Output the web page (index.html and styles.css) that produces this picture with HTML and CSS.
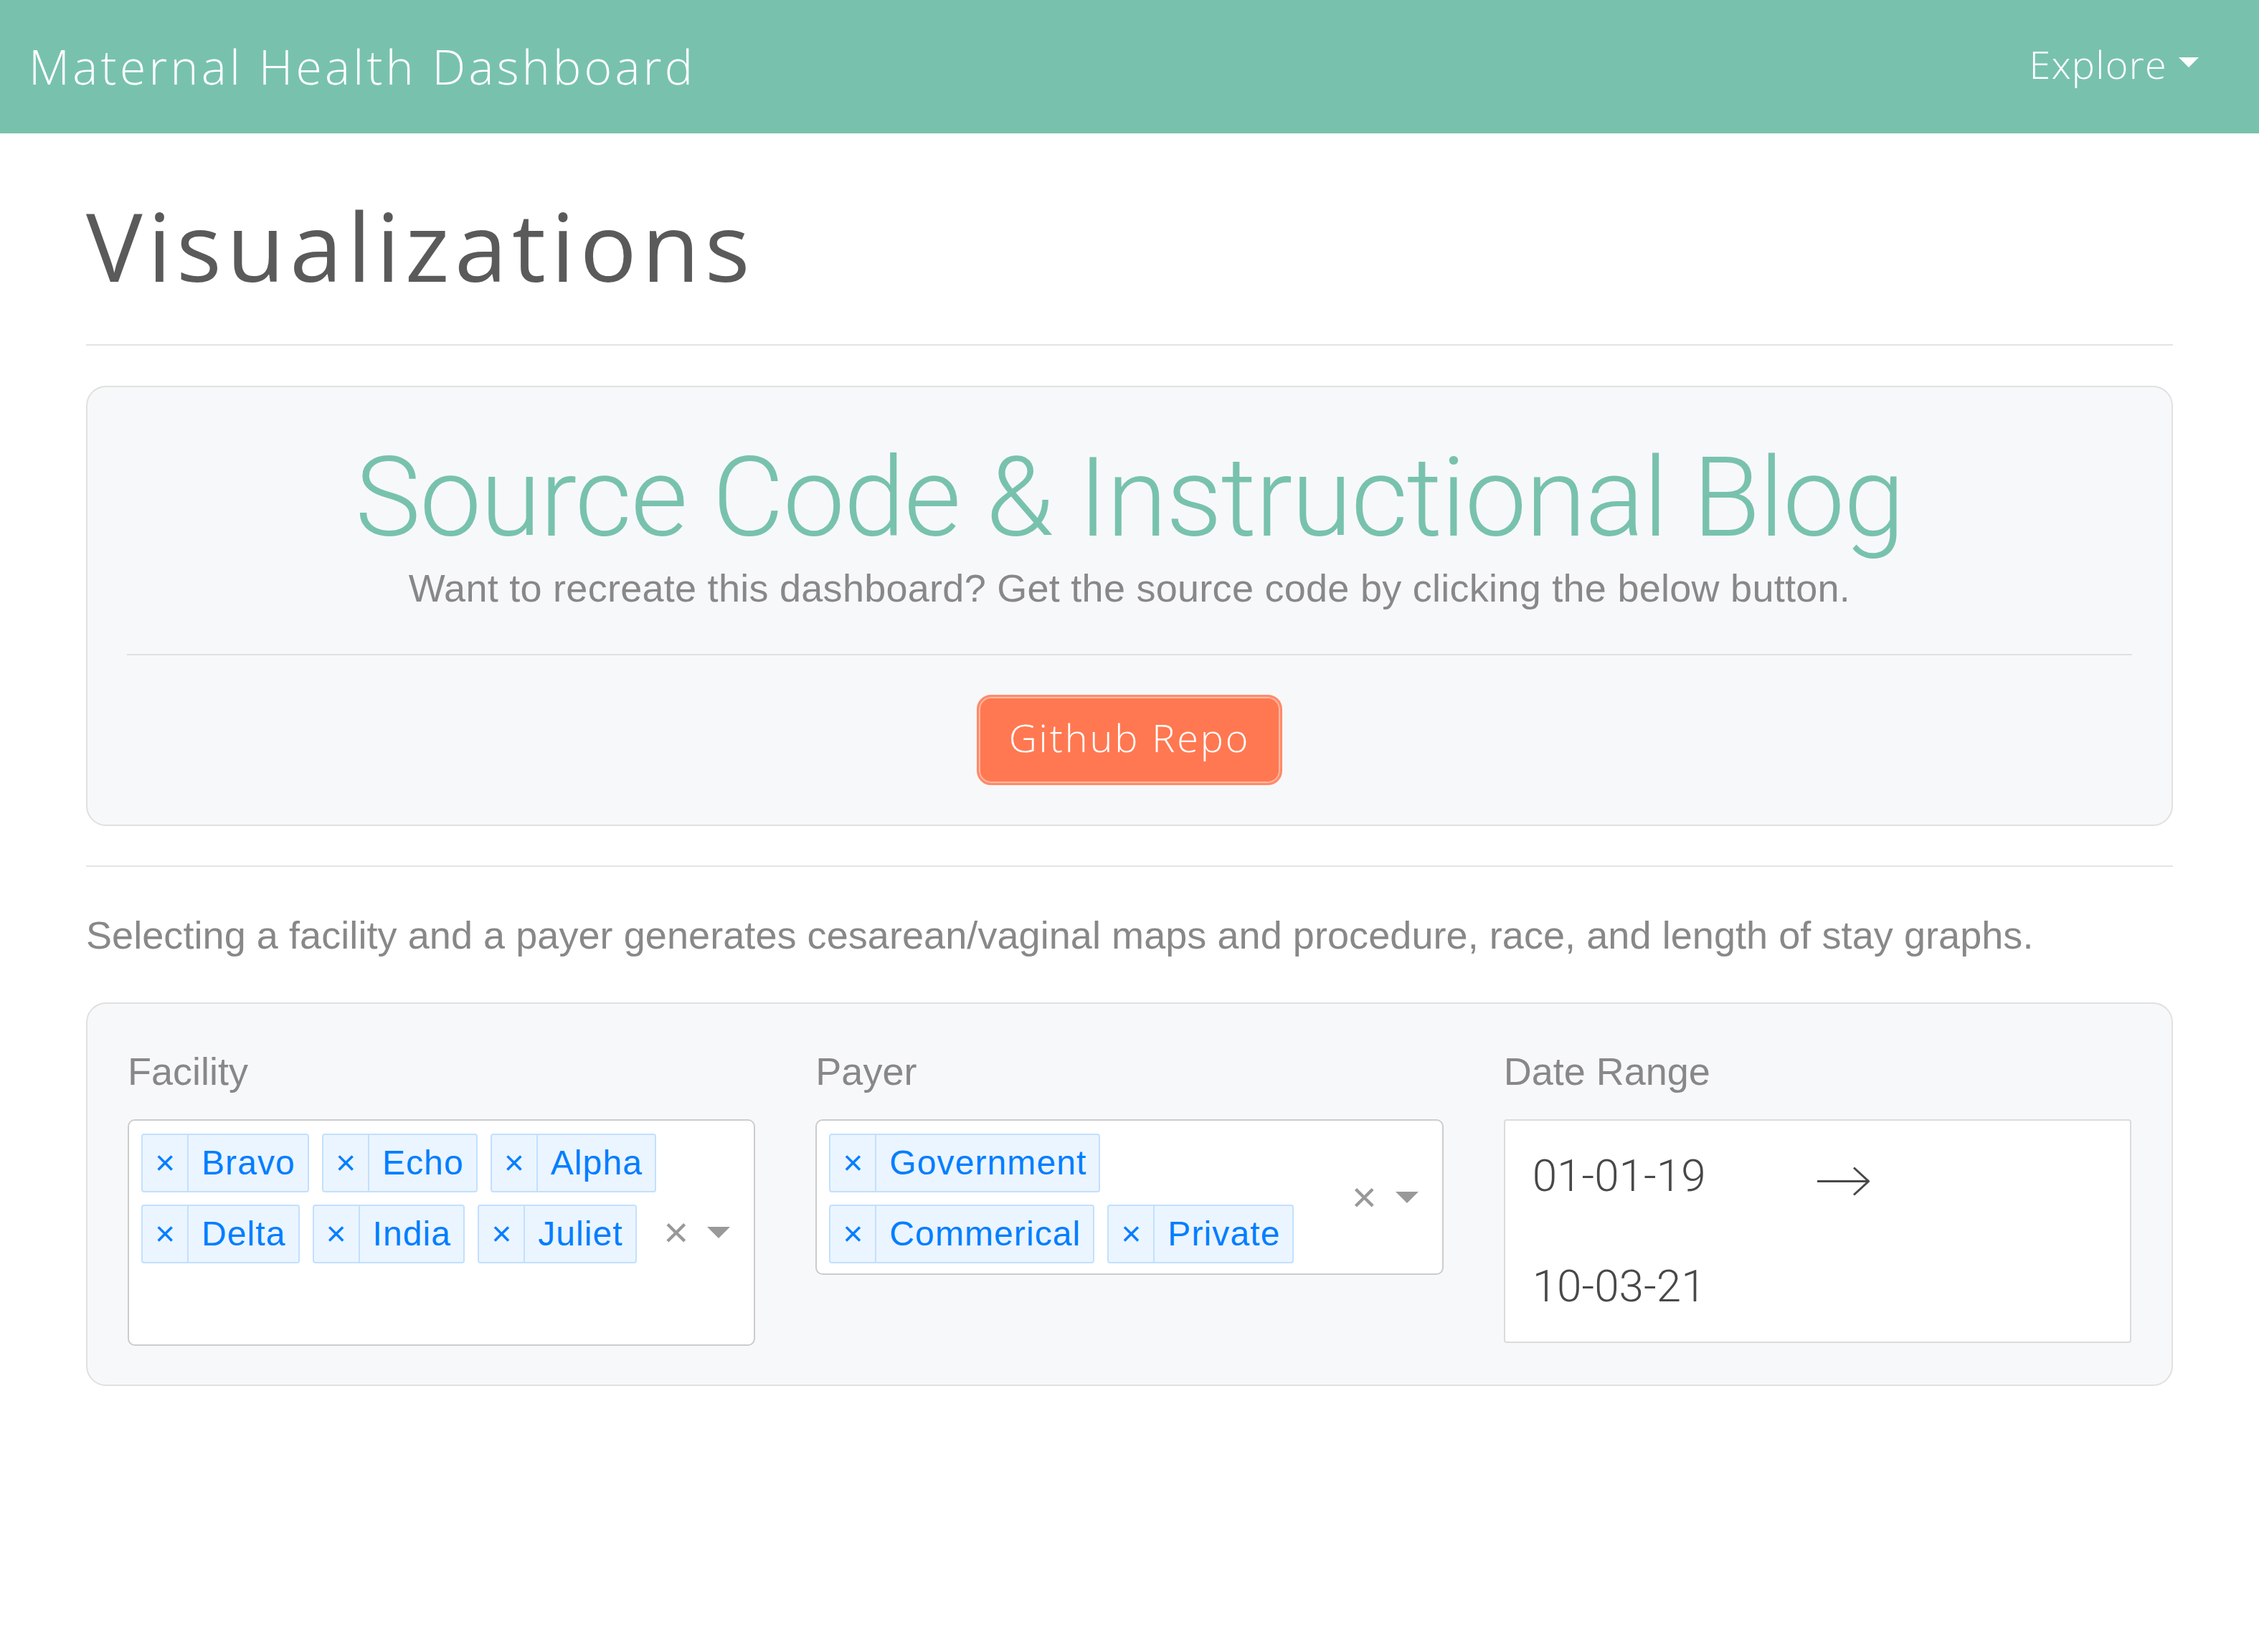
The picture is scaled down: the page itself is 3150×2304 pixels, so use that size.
FILE: index.html
```html
<!DOCTYPE html>
<html lang="en">
<head>
<meta charset="utf-8">
<title>Maternal Health Dashboard</title>
<link rel="stylesheet" href="styles.css">
</head>
<body>
<nav class="navbar">
  <span class="brand">Maternal Health Dashboard</span>
  <span class="explore">Explore<span class="caret"></span></span>
</nav>
<main class="container">
  <h1 class="page-title">Visualizations</h1>
  <hr class="rule">
  <section class="jumbo">
    <h2 class="jumbo-title">Source Code &amp; Instructional Blog</h2>
    <p class="lead">Want to recreate this dashboard? Get the source code by clicking the below button.</p>
    <hr class="jumbo-rule">
    <div class="btn-row"><a class="btn-danger">Github Repo</a></div>
  </section>
  <hr class="rule rule-2">
  <p class="intro">Selecting a facility and a payer generates cesarean/vaginal maps and procedure, race, and length of stay graphs.</p>
  <section class="filters">
    <div class="filter">
      <label class="filter-label">Facility</label>
      <div class="select">
        <div class="values">
          <span class="tag"><span class="tag-icon">×</span><span class="tag-label">Bravo</span></span>
          <span class="tag"><span class="tag-icon">×</span><span class="tag-label">Echo</span></span>
          <span class="tag"><span class="tag-icon">×</span><span class="tag-label">Alpha</span></span>
          <span class="tag"><span class="tag-icon">×</span><span class="tag-label">Delta</span></span>
          <span class="tag"><span class="tag-icon">×</span><span class="tag-label">India</span></span>
          <span class="tag"><span class="tag-icon">×</span><span class="tag-label">Juliet</span></span>
          <span class="select-input"></span>
        </div>
        <span class="clear">×</span>
        <span class="arrow"></span>
      </div>
    </div>
    <div class="filter">
      <label class="filter-label">Payer</label>
      <div class="select">
        <div class="values">
          <span class="tag"><span class="tag-icon">×</span><span class="tag-label">Government</span></span>
          <span class="tag"><span class="tag-icon">×</span><span class="tag-label">Commerical</span></span>
          <span class="tag"><span class="tag-icon">×</span><span class="tag-label">Private</span></span>
          <span class="select-input"></span>
        </div>
        <span class="clear">×</span>
        <span class="arrow"></span>
      </div>
    </div>
    <div class="filter">
      <label class="filter-label">Date Range</label>
      <div class="date-range">
        <span class="date-input">01-01-19</span>
        <svg class="date-arrow" width="73" height="41" viewBox="0 0 73 41" aria-hidden="true">
          <path d="M0 20.5 H71 M51 1.5 L71.5 20.5 L51 39.5" fill="none" stroke="#484848" stroke-width="3" stroke-linejoin="miter"/>
        </svg>
        <span class="date-input">10-03-21</span>
      </div>
    </div>
  </section>
</main>
</body>
</html>
```

FILE: styles.css
```css
* { box-sizing: border-box; }

html, body {
  margin: 0;
  padding: 0;
  background: #ffffff;
}

body {
  font-family: "Liberation Sans", Arial, sans-serif;
  color: #888888;
}

/* ---------- navbar ---------- */
.navbar {
  height: 186px;
  background: #78c2ad;
  display: flex;
  align-items: center;
  justify-content: space-between;
  padding: 0 84px 0 40px;
  color: #ffffff;
  font-family: "Open Sans", "DejaVu Sans", sans-serif;
  font-weight: 300;
}

.brand {
  font-size: 66px;
  line-height: 1;
  letter-spacing: 4.3px;
  margin-bottom: 3px;
  white-space: nowrap;
}

.explore {
  font-size: 54px;
  line-height: 1;
  letter-spacing: 1.3px;
  margin-bottom: 8px;
  white-space: nowrap;
}

.caret {
  display: inline-block;
  width: 0;
  height: 0;
  margin-left: 16px;
  vertical-align: 16px;
  border-top: 14px solid #ffffff;
  border-left: 14.5px solid transparent;
  border-right: 14.5px solid transparent;
}

/* ---------- main ---------- */
.container {
  padding: 0 120px;
}

.page-title {
  margin: 76px 0 0;
  font-family: "Open Sans", "DejaVu Sans", sans-serif;
  font-weight: 400;
  font-size: 132px;
  line-height: 160px;
  letter-spacing: 7px;
  color: #5a5a5a;
}

.rule {
  margin: 58px 0 0;
  height: 0;
  border: 0;
  border-top: 2px solid #e4e4e4;
}

.rule-2 {
  margin-top: 55px;
}

/* ---------- jumbotron card ---------- */
.jumbo {
  margin-top: 56px;
  border: 2px solid #e0e0e0;
  border-radius: 28px;
  background: #f7f8fa;
  padding: 70px 55px 55px;
  text-align: center;
}

.jumbo-title {
  margin: 0;
  font-family: "Roboto", "Liberation Sans", sans-serif;
  font-weight: 300;
  font-size: 154px;
  line-height: 170px;
  letter-spacing: -1.6px;
  color: #78c2ad;
}

.lead {
  margin: 0;
  font-size: 54px;
  line-height: 81px;
  letter-spacing: 0.27px;
  color: #888888;
}

.jumbo-rule {
  margin: 51px 0 55px;
  height: 0;
  border: 0;
  border-top: 2px solid #e0e0e0;
}

.btn-row {
  display: flex;
  justify-content: center;
}

.btn-danger {
  display: block;
  width: 426px;
  height: 126px;
  padding: 0 0 8px;
  border: 3px solid #ff8b6b;
  border-radius: 20px;
  background: #ff7851;
  box-shadow: inset 0 0 0 2px #ffb8a2;
  color: #ffffff;
  font-family: "Open Sans", "DejaVu Sans", sans-serif;
  font-weight: 300;
  font-size: 54px;
  line-height: 112px;
  letter-spacing: 2.9px;
  text-align: center;
  white-space: nowrap;
}

/* ---------- intro ---------- */
.intro {
  margin: 55px 0 0;
  font-size: 54px;
  line-height: 81px;
  letter-spacing: 0.07px;
  color: #888888;
}

/* ---------- filters card ---------- */
.filters {
  margin-top: 53px;
  border: 2px solid #e0e0e0;
  border-radius: 28px;
  background: #f7f8fa;
  padding: 54px 56px;
  display: grid;
  grid-template-columns: repeat(3, 1fr);
  column-gap: 84px;
  align-items: start;
}

.filter-label {
  display: block;
  margin-bottom: 26px;
  font-size: 54px;
  line-height: 81px;
  color: #888888;
}

.select {
  display: flex;
  align-items: center;
  background: #ffffff;
  border: 2px solid #cccccc;
  border-radius: 10px;
}

.values {
  flex: 1;
  display: flex;
  flex-wrap: wrap;
  align-content: flex-start;
  gap: 17px 18px;
  padding: 18px 6px 14px 17px;
}

.tag {
  display: flex;
  height: 82px;
  border: 2px solid #c2e0ff;
  border-radius: 4px;
  background: #ebf5ff;
  color: #007eff;
  font-size: 48px;
  line-height: 78px;
  white-space: nowrap;
}

.tag-icon {
  width: 64px;
  text-align: center;
  border-right: 2px solid #c2e0ff;
}

.tag-label {
  padding: 0 17px 0 18px;
  letter-spacing: 1.1px;
}

.select-input {
  display: block;
  width: 40px;
  height: 82px;
}

.clear {
  width: 35px;
  text-align: center;
  font-size: 60px;
  line-height: 60px;
  color: #999999;
}

.arrow {
  width: 0;
  height: 0;
  margin: 0 33px 0 26px;
  border-top: 16px solid #999999;
  border-left: 16.5px solid transparent;
  border-right: 16.5px solid transparent;
}

/* ---------- date range ---------- */
.date-range {
  display: flex;
  flex-wrap: wrap;
  align-items: flex-start;
  background: #ffffff;
  border: 2px solid #dbdbdb;
  border-radius: 4px;
}

.date-input {
  display: block;
  width: 400px;
  padding-left: 38px;
  font-family: "Roboto", "Liberation Sans", sans-serif;
  font-weight: 300;
  font-size: 62px;
  line-height: 154px;
  color: #484848;
}

.date-arrow {
  display: block;
  margin: 64px 0 0 35px;
}
```
